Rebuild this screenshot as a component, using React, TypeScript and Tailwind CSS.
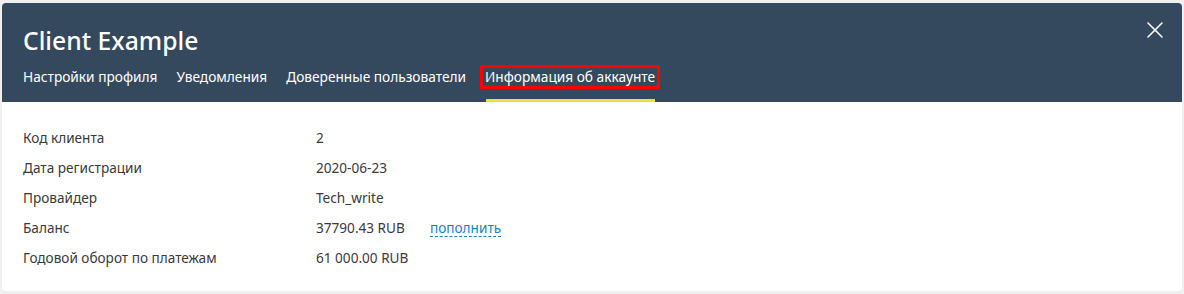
import React from 'react';
import { X } from 'lucide-react';

const tabs = ['Настройки профиля', 'Уведомления', 'Доверенные пользователи', 'Информация об аккаунте'];

const rows: { label: string; value: string; link?: string }[] = [
  { label: 'Код клиента', value: '2' },
  { label: 'Дата регистрации', value: '2020-06-23' },
  { label: 'Провайдер', value: 'Tech_write' },
  { label: 'Баланс', value: '37790.43 RUB', link: 'пополнить' },
  { label: 'Годовой оборот по платежам', value: '61 000.00 RUB' },
];

export default function App() {
  return (
    <div className="h-[294px] w-[1184px] bg-[#f0f0f0] pl-[2px] pr-[2px] pt-[3px] font-['Noto_Sans',sans-serif]">
      <div className="h-[288px] overflow-hidden rounded-[4px] bg-white">
        {/* Header */}
        <div className="relative flex h-[99px] flex-col bg-[#34495e] px-[21px] pt-[22px]">
          <h1 className="text-[24.7px] font-medium leading-[32px] text-white">Client Example</h1>
          <div className="mt-[8px] flex flex-1 gap-[19px] text-[13.7px] text-white">
            {tabs.map((t, i) => {
              const active = i === tabs.length - 1;
              return (
                <div key={t} className="flex flex-col items-center">
                  <span className={active ? '-mx-[5px] border-[3px] border-[#ff0000] px-[2px] leading-[18px]' : 'pt-[3px] leading-[18px]'}>
                    {t}
                  </span>
                  {active && <div className="mt-auto h-[3px] w-[169px] bg-[#f0e12e]" />}
                </div>
              );
            })}
          </div>
          <button className="absolute right-[13px] top-[13px] text-white">
            <X size={28} strokeWidth={1.3} />
          </button>
        </div>
        {/* Body */}
        <div className="px-[21px] pt-[21px] text-[13.6px] text-[#3a3a3a]">
          {rows.map(r => (
            <div key={r.label} className="flex h-[30px] items-center">
              <div className="w-[293px]">{r.label}</div>
              <div className="w-[114px]">{r.value}</div>
              {r.link && (
                <span className="border-b border-dashed border-[#1a7fc1] leading-[17px] text-[#1a7fc1]">{r.link}</span>
              )}
            </div>
          ))}
        </div>
      </div>
    </div>
  );
}
